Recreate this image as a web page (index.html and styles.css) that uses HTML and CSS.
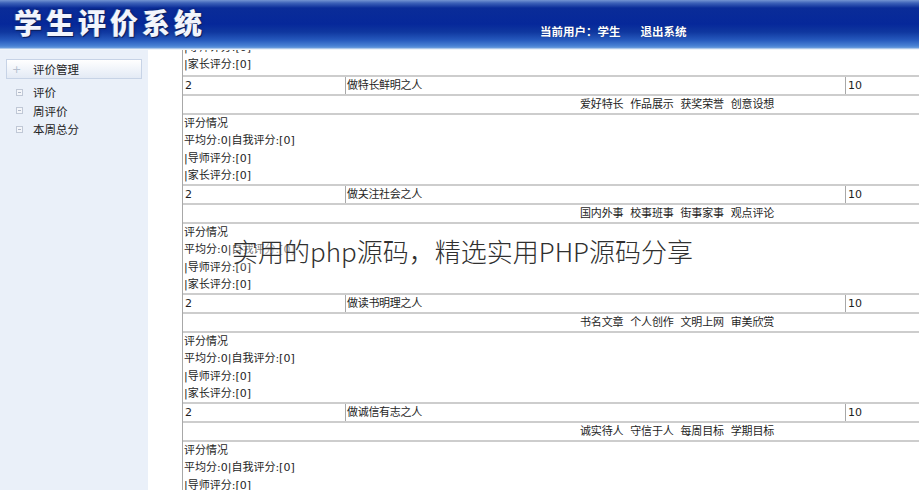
FILE: index.html
```html
<!DOCTYPE html>
<html lang="zh">
<head>
<meta charset="utf-8">
<title>学生评价系统</title>
<link rel="stylesheet" href="styles.css">
</head>
<body>
<div class="page">
  <header class="header">
    <h1 class="title">学生评价系统</h1>
    <div class="userbar">
      <span class="user">当前用户：学生</span>
      <span class="logout">退出系统</span>
    </div>
  </header>
  <div class="main">
    <aside class="sidebar">
      <div class="menu-head"><span class="plus">+</span><span>评价管理</span></div>
      <ul class="menu">
        <li><span class="box"></span>评价</li>
        <li><span class="box"></span>周评价</li>
        <li><span class="box"></span>本周总分</li>
      </ul>
    </aside>
    <section class="content">
      <div class="list">
        <div class="score first">
          <div>|导师评分:[0]</div>
          <div>|家长评分:[0]</div>
        </div>

        <div class="row item"><div class="c1">2</div><div class="c2">做特长鲜明之人</div><div class="c3">10</div></div>
        <div class="row tags">爱好特长 作品展示 获奖荣誉 创意设想</div>
        <div class="row score">
          <div>评分情况</div>
          <div>平均分:0|自我评分:[0]</div>
          <div>|导师评分:[0]</div>
          <div>|家长评分:[0]</div>
        </div>

        <div class="row item"><div class="c1">2</div><div class="c2">做关注社会之人</div><div class="c3">10</div></div>
        <div class="row tags">国内外事 校事班事 街事家事 观点评论</div>
        <div class="row score">
          <div>评分情况</div>
          <div>平均分:0|自我评分:[0]</div>
          <div>|导师评分:[0]</div>
          <div>|家长评分:[0]</div>
        </div>

        <div class="row item"><div class="c1">2</div><div class="c2">做读书明理之人</div><div class="c3">10</div></div>
        <div class="row tags">书名文章 个人创作 文明上网 审美欣赏</div>
        <div class="row score">
          <div>评分情况</div>
          <div>平均分:0|自我评分:[0]</div>
          <div>|导师评分:[0]</div>
          <div>|家长评分:[0]</div>
        </div>

        <div class="row item"><div class="c1">2</div><div class="c2">做诚信有志之人</div><div class="c3">10</div></div>
        <div class="row tags">诚实待人 守信于人 每周目标 学期目标</div>
        <div class="row score">
          <div>评分情况</div>
          <div>平均分:0|自我评分:[0]</div>
          <div>|导师评分:[0]</div>
          <div>|家长评分:[0]</div>
        </div>
      </div>
    </section>
  </div>
  <div class="watermark">实用的php源码，精选实用PHP源码分享</div>
</div>
</body>
</html>
```
FILE: styles.css
```css
* { box-sizing: border-box; }
html, body { margin: 0; padding: 0; }
body {
  width: 919px;
  height: 490px;
  overflow: hidden;
  background: #ffffff;
  font-family: "DejaVu Sans", "Noto Sans CJK SC", sans-serif;
  font-size: 11px;
  color: #1e1e1e;
}
.page {
  position: relative;
  width: 919px;
  height: 490px;
  display: flex;
  flex-direction: column;
}
.header {
  height: 50px;
  flex: none;
  display: flex;
  align-items: flex-start;
  background: linear-gradient(to bottom, #7495d2 0, #3d62b8 3px, #0a2c98 8px, #06289a 24px, #0f379f 32px, #2659bd 40px, #4a82d4 46px, #6d9edd 48px, #e9eff7 49px, #f4f7fb 50px);
}
.title {
  margin: 6px 0 0 14px;
  width: 200px;
  flex: none;
  font-family: "Noto Sans CJK SC", sans-serif;
  font-size: 28px;
  line-height: 32px;
  font-weight: 900;
  letter-spacing: 4px;
  white-space: nowrap;
  color: #f2f5fc;
  text-shadow: 1px 1px 0 #0b1f5c, -1px 0 0 #3c5aa8, 0 0 3px #0a1a50;
}
.userbar {
  margin: 24px 0 0 326px;
  display: flex;
  gap: 20px;
  font-family: "Noto Sans CJK SC", sans-serif;
  font-size: 11.5px;
  line-height: 14px;
  font-weight: 700;
  color: #ffffff;
  text-shadow: 0 0 1px #102a70;
}
.main {
  flex: 1;
  display: flex;
  min-height: 0;
}
.sidebar {
  width: 148px;
  flex: none;
  background: #eaf0f9;
  padding: 9px 6px 0 6px;
  font-family: "Noto Sans CJK SC", sans-serif;
  font-size: 11.5px;
  color: #222;
}
.menu-head {
  height: 20px;
  border: 1px solid #c7d3e6;
  background: linear-gradient(to bottom, #ffffff, #e3eaf5);
  display: flex;
  align-items: center;
  padding-left: 5px;
  gap: 13px;
}
.plus {
  color: #b5bfcf;
  font-size: 11px;
  font-family: "DejaVu Sans", sans-serif;
  width: 8px;
}
.menu {
  list-style: none;
  margin: 4px 0 0 0;
  padding: 0 0 0 10px;
}
.menu li {
  height: 18.5px;
  display: flex;
  align-items: center;
  gap: 10px;
}
.box {
  width: 7px;
  height: 7px;
  border: 1px solid #c0c8d6;
  position: relative;
  background: #f4f6fa;
}
.box::after {
  content: "";
  position: absolute;
  left: 1px;
  right: 1px;
  top: 2px;
  height: 1px;
  background: #b0b8c8;
}
.content {
  flex: 1;
  min-width: 0;
  overflow: hidden;
  padding-left: 34px;
  background: #ffffff;
}
.list {
  width: 1000px;
  border-left: 1px solid #a8a8a8;
  line-height: 17px;
}
.row {
  border-top: 2px solid #cdcdcd;
}
.item {
  display: grid;
  grid-template-columns: 162px 500px 1fr;
  height: 19px;
}
.c1 { padding-left: 2px; }
.c2 { border-left: 1px solid #a8a8a8; padding-left: 1px; letter-spacing: -0.3px; }
.c3 { border-left: 1px solid #a8a8a8; padding-left: 2px; }
.tags {
  height: 19px;
  padding-left: 397px;
  word-spacing: 3.5px;
  letter-spacing: -0.15px;
}
.score {
  height: 71px;
  padding-left: 1px;
  line-height: 17.4px;
}
.score.first {
  height: 36px;
  margin-top: -11px;
}
.watermark {
  position: absolute;
  left: 232px;
  top: 235px;
  font-family: "Noto Sans CJK SC", sans-serif;
  font-size: 26px;
  line-height: 32px;
  font-weight: 300;
  color: #303030;
  text-shadow: 0 0 6px #ffffff, 0 0 10px #ffffff, 0 0 14px rgba(255,255,255,0.9);
  white-space: nowrap;
}
```
